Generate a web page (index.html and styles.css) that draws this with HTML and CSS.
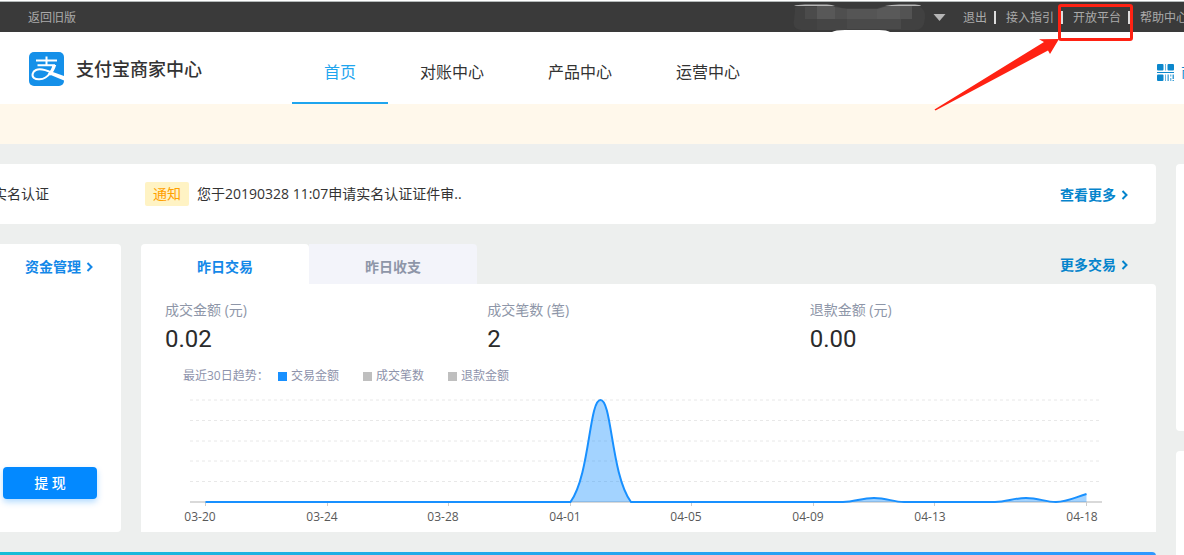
FILE: index.html
```html
<!DOCTYPE html>
<html lang="zh-CN">
<head>
<meta charset="utf-8">
<meta name="viewport" content="width=device-width, initial-scale=1">
<title>支付宝商家中心</title>
<link rel="stylesheet" href="styles.css">
</head>
<body>
<div class="page">
  <div class="topbar">
    <a class="topbar-link" href="#">返回旧版</a>
    <div class="topbar-right">
      <button class="account" type="button" aria-label="账户">
        <svg class="account-mask" viewBox="0 0 132 30" aria-hidden="true">
          <path d="M2 8Q0 3 12 3H40L50 6H84L94 3H120Q132 4 132 14Q132 28 122 28H8Q-1 27 1 18Z" fill="#414141"/>
          <path d="M12 5h12v12h-12z" fill="#4b4b4b"/>
          <path d="M24 4h16l2 1v12h-18z" fill="#585858"/>
          <path d="M42 5l12 2v10h-12z" fill="#4f4f4f"/>
          <path d="M54 7h30v10h-30z" fill="#555"/>
          <path d="M84 7l10-3h13v13h-23z" fill="#595959"/>
          <path d="M107 4h12v13h-12z" fill="#535353"/>
          <path d="M24 17h30v11h-30z" fill="#454545"/>
          <path d="M54 17h54v10h-54z" fill="#4a4a4a"/>
          <path d="M1 4Q4 2.500 12 2.500H34Q39 2.500 42 4ZM92 4Q98 2.500 106 2.500H122Q127 2.500 128 4Z" fill="#b8b8b8"/>
          <path d="M39 30Q42 28 52 28H86Q94 28 97 30Z" fill="#fff"/>
        </svg>
        <svg class="caret" viewBox="0 0 12 7" aria-hidden="true"><path d="M0 0h12L6 7z" fill="#b5b5b5"/></svg>
      </button>
      <nav class="topbar-nav">
        <a class="topbar-link" href="#">退出</a>
        <a class="topbar-link" href="#">接入指引</a>
        <a class="topbar-link marked" href="#">开放平台<svg class="marker" viewBox="0 0 202 108" aria-hidden="true">
          <rect x="127.500" y="2.500" width="72" height="34" rx="1.500" fill="none" stroke="#ff2213" stroke-width="3"/>
          <path d="M127 36L107 36.300L112 39L2.500 106.500L3.500 107.500L116 47.500L118 51Z" fill="#ff2213"/>
        </svg></a>
        <a class="topbar-link" href="#">帮助中心</a>
      </nav>
    </div>
  </div>

  <header class="header">
    <a class="brand" href="#">
      <svg class="brand-logo" viewBox="0 0 35 34" aria-hidden="true">
        <rect width="35" height="34" rx="5" fill="#1590e9"/>
        <path d="M7 8.500H28M8.500 13.300H26M17.500 4.500V13" fill="none" stroke="#fff" stroke-width="2"/>
        <path d="M25 13.800C23.500 18.500 20.500 23 16.500 25.500C13 27.700 7.500 28 5 26C2.300 23.800 3.500 19.500 7 18C12 16 18 18.500 23 20.800" fill="none" stroke="#fff" stroke-width="2"/>
        <path d="M21 19L35 24V28.500L20.500 22.500Z" fill="#fff"/>
        <path d="M23.500 13h3.700C26 17 24 20.500 21.500 23.600L18.500 22.200C21 19.600 22.700 16.800 23.500 13Z" fill="#fff"/>
      </svg>
      <span class="brand-name">支付宝商家中心</span>
    </a>
    <nav class="nav">
      <a class="nav-item active" href="#">首页</a>
      <a class="nav-item" href="#">对账中心</a>
      <a class="nav-item" href="#">产品中心</a>
      <a class="nav-item" href="#">运营中心</a>
    </nav>
    <a class="qr-link" href="#">
      <svg class="qr-icon" viewBox="0 0 17 17" aria-hidden="true" fill="#0b87cc">
        <rect width="6.500" height="6.500" rx="1"/><rect x="8" width="1" height="6.500" opacity=".6"/><rect x="10.500" width="6.500" height="6.500" rx="1"/>
        <rect y="8" width="17" height="1"/>
        <rect y="10.500" width="6.500" height="6.500" rx="1"/><rect x="8" y="10.500" width="1" height="6.500" opacity=".6"/><rect x="10.500" y="10.500" width="1.300" height="6.500" opacity=".8"/>
        <path d="M13.300 10.500h1v2h-1zM13.300 14h1v3h-1zM15.500 10.500h1.500v4.500h-1.500zM15.500 16h1.500v1h-1.500z" opacity=".8"/>
      </svg>
      <span>商家码</span>
    </a>
  </header>
  <div class="banner"></div>

  <div class="layout">
    <main class="main">
      <section class="card notice">
        <a class="notice-text" href="#">实名认证</a>
        <span class="tag">通知</span>
        <a class="notice-text next" href="#">您于20190328 11:07申请实名认证证件审..</a>
        <a class="more" href="#">查看更多<svg class="chevron" viewBox="0 0 6 10" aria-hidden="true"><path d="M1 1l4 4-4 4"/></svg></a>
      </section>

      <div class="row">
        <section class="card funds">
          <a class="more bright" href="#">资金管理<svg class="chevron" viewBox="0 0 6 10" aria-hidden="true"><path d="M1 1l4 4-4 4"/></svg></a>
          <button class="withdraw" type="button">提 现</button>
        </section>

        <section class="trade">
          <div class="tabs">
            <button class="tab active" type="button">昨日交易</button>
            <button class="tab" type="button">昨日收支</button>
            <a class="more" href="#">更多交易<svg class="chevron" viewBox="0 0 6 10" aria-hidden="true"><path d="M1 1l4 4-4 4"/></svg></a>
          </div>
          <div class="trade-body">
            <dl class="stats">
              <div><dt>成交金额 (元)</dt><dd>0.02</dd></div>
              <div><dt>成交笔数 (笔)</dt><dd>2</dd></div>
              <div><dt>退款金额 (元)</dt><dd>0.00</dd></div>
            </dl>
            <div class="legend">
              <span class="legend-title">最近30日趋势：</span>
              <button class="legend-item on" type="button">交易金额</button>
              <button class="legend-item" type="button">成交笔数</button>
              <button class="legend-item" type="button">退款金额</button>
            </div>
            <svg class="chart" viewBox="0 0 1015 142" role="img" aria-label="最近30日交易金额趋势">
              <path class="grid" d="M49 10H960M49 30.500H960M49 51H960M49 71H960M49 91.500H960"/>
              <path class="axis" d="M49 112H961"/>
              <path class="tick" d="M64.500 112v4M186.500 112v4M307.500 112v4M429.500 112v4M550.500 112v4M672.500 112v4M793.500 112v4M945.500 112v4"/>
              <path class="area" d="M429 112C449 85 448 10 459.500 10S470 85 490 112ZM702 112C714 112 720 108 733 108S752 112 763 112ZM854 112C866 112 872 108 885 108S904 112 915 112S935 107 945.500 104V112Z"/>
              <path class="line" d="M64.500 112H429.500C449 85 448 10 459.500 10S470 85 490 112H702C714 112 720 108 733 108S752 112 763 112H854C866 112 872 108 885 108S904 112 915 112S935 107 945.500 104"/>
              <g class="labels">
                <text x="59" y="131">03-20</text><text x="181" y="131">03-24</text><text x="302" y="131">03-28</text><text x="424" y="131">04-01</text><text x="545" y="131">04-05</text><text x="667" y="131">04-09</text><text x="789" y="131">04-13</text><text x="941" y="131">04-18</text>
              </g>
            </svg>
          </div>
        </section>
      </div>
      <section class="promo"></section>
    </main>
    <aside class="side">
      <div class="card side-top"></div>
      <div class="card side-bottom"></div>
    </aside>
  </div>
</div>
</body>
</html>
```

FILE: styles.css
```css
* { box-sizing: border-box; }

body {
  margin: 0;
  background: #edefee;
  color: #333;
  font-family: "Open Sans", "Noto Sans CJK SC", sans-serif;
  font-size: 14px;
  line-height: 20px;
}

a { color: inherit; text-decoration: none; white-space: nowrap; }

button {
  padding: 0;
  border: 0;
  background: none;
  color: inherit;
  font: inherit;
  cursor: pointer;
}

svg { display: block; flex: none; }

.page {
  display: flex;
  flex-direction: column;
  height: 100vh;
  border-top: 1px solid #fff;
  overflow: hidden;
}

/* Top bar */
.topbar {
  display: flex;
  flex: none;
  justify-content: space-between;
  height: 31px;
  padding-left: 28px;
  border-top: 1px solid #b4b9b9;
  background: #3a3a3a;
  color: #aaa;
  font-size: 12px;
  line-height: 30px;
}

.topbar-right { display: flex; gap: 17px; margin-right: -4px; }
.account { display: flex; align-items: center; gap: 8px; }
.account-mask { width: 132px; height: 30px; }
.caret { width: 13px; height: 7px; }
.topbar-nav { display: flex; align-items: center; }
.topbar-link { padding-top: 1px; }

.topbar-nav .topbar-link + .topbar-link {
  display: flex;
  align-items: center;
}

.topbar-nav .topbar-link + .topbar-link::before {
  content: "";
  width: 2px;
  height: 13px;
  margin: 0 10px 0 7px;
  background: #ddd;
}

.marked { position: relative; }

.marker {
  position: absolute;
  top: 1px;
  right: -13px;
  z-index: 2;
  width: 202px;
  height: 108px;
  pointer-events: none;
}

/* Header */
.header {
  display: flex;
  flex: none;
  height: 72px;
  padding-left: 29px;
  background: #fff;
}

.brand { display: flex; align-items: center; gap: 12px; padding-top: 2px; }
.brand-logo { width: 35px; height: 34px; }
.brand-name { font-size: 18px; font-weight: 500; }
.nav { display: flex; margin-left: 90px; }

.nav-item {
  padding: 8px 32px 0;
  border-bottom: 2px solid transparent;
  font-size: 16px;
  line-height: 64px;
}

.nav-item.active { border-color: #1fa5ee; color: #1fa5ee; }

.qr-link {
  display: flex;
  align-items: center;
  gap: 7px;
  width: 27px;
  margin-left: auto;
  padding-top: 8px;
  color: #0b87cc;
  overflow: hidden;
}

.qr-icon { width: 17px; height: 17px; }
.banner { flex: none; height: 40px; background: #fff8eb; }

/* Content */
.layout {
  display: grid;
  flex: 1;
  grid-template-columns: minmax(0, 1fr) 8px;
  gap: 20px;
  padding-top: 20px;
}

.main { display: flex; flex-direction: column; gap: 20px; min-height: 0; }
.card { border-radius: 0 4px 4px 0; background: #fff; }
.side { display: flex; flex-direction: column; gap: 20px; }
.side .card { border-radius: 4px 0 0 4px; }
.side-top { height: 267px; }
.side-bottom { flex: 1; }

.notice {
  display: flex;
  flex: none;
  align-items: center;
  height: 60px;
  padding-right: 28px;
  overflow: hidden;
}

.notice-text { margin-left: -7px; }
.notice-text.next { margin-left: 8px; }

.tag {
  margin-left: 96px;
  padding: 2px 8px;
  border-radius: 2px;
  background: #fff3c4;
  color: #ffa000;
}

.more {
  display: flex;
  align-items: center;
  gap: 5px;
  margin-left: auto;
  padding-top: 2px;
  color: #0584cc;
  font-weight: 700;
}

.more.bright { padding-top: 0; color: #1488e8; }
.chevron { width: 7px; height: 10px; }
.chevron path { fill: none; stroke: currentColor; stroke-width: 2; }

.row {
  display: grid;
  grid-template-columns: 121px minmax(0, 1fr);
  gap: 20px;
}

.funds {
  display: flex;
  flex-direction: column;
  align-items: flex-end;
  justify-content: space-between;
  padding: 13px 24px 33px 0;
}

.funds .more { margin-right: 4px; }

.withdraw {
  width: 94px;
  height: 32px;
  border-radius: 4px;
  background: #0389ff;
  box-shadow: 0 3px 6px rgba(3, 137, 255, 0.3);
  color: #fff;
  font-weight: 500;
}

.tabs { display: flex; height: 40px; padding-right: 28px; }

.tab {
  width: 168px;
  padding-top: 6px;
  border-radius: 0 4px 0 0;
  background: #f3f4fa;
  color: #8e96a8;
  font-weight: 700;
}

.tab.active { border-radius: 4px 4px 0 0; background: #fff; color: #1488e8; }
.trade-body { padding-top: 16px; border-radius: 0 4px 0 0; background: #fff; }

.stats {
  display: grid;
  grid-template-columns: repeat(3, 1fr);
  margin: 0;
  padding: 0 24px;
  color: #8e96a8;
}

.stats dd {
  margin: 0;
  color: #2b2b2b;
  font-family: Roboto, sans-serif;
  font-size: 24px;
  line-height: 38px;
}

.legend {
  display: flex;
  gap: 24px;
  padding: 8px 42px 4px;
  color: #8e93ab;
  font-size: 12px;
}

.legend-title { width: 71px; white-space: nowrap; }
.legend-item { display: flex; align-items: center; gap: 4px; }
.legend-item::before { content: ""; width: 9px; height: 9px; background: #bfbfbf; }
.legend-item.on::before { background: #1890ff; }

.chart { width: 100%; height: auto; }
.grid { fill: none; stroke: #e8e8e8; stroke-dasharray: 3 3; }
.axis { stroke: #d9d9d9; stroke-width: 2; }
.tick { stroke: #ccc; }
.area { fill: #1890ff; fill-opacity: 0.4; }
.line { fill: none; stroke: #1890ff; stroke-width: 2; }
.labels { fill: #595959; font-size: 12px; text-anchor: middle; }

.promo {
  flex: none;
  height: 60px;
  border-radius: 0 4px 0 0;
  background: linear-gradient(90deg, #18bdd6, #22a9ea 40%, #2f98ff);
}
```
